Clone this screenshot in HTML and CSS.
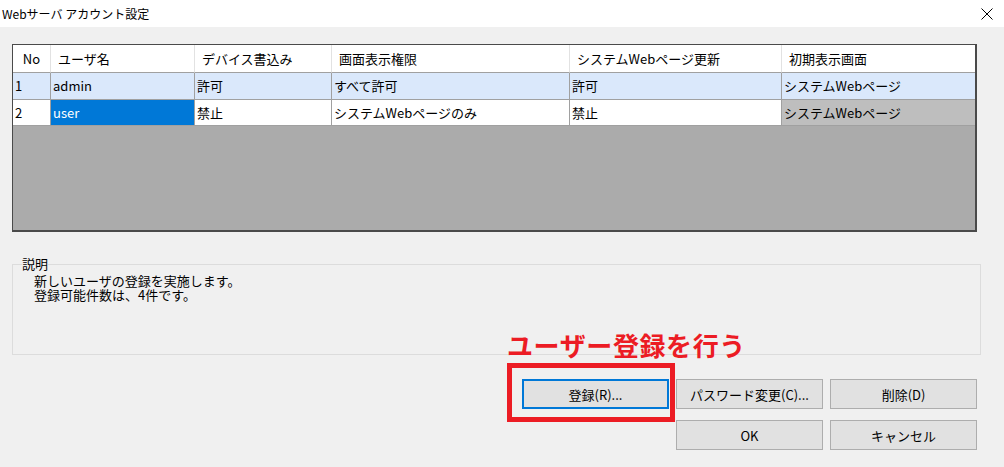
FILE: index.html
```html
<!DOCTYPE html>
<html lang="ja">
<head>
	<meta charset="UTF-8">
	<title>Webサーバ アカウント設定</title>
	<link rel="stylesheet" href="styles.css">
</head>
<body>
	<div class="titlebar">
		<span class="title">Webサーバ アカウント設定</span>
		<svg class="close" width="12" height="12" viewBox="0 0 12 12">
			<path d="M0.5 0.5 L11.5 11.5 M11.5 0.5 L0.5 11.5" stroke="#000" stroke-width="1" fill="none"/>
		</svg>
	</div>
	<div class="dialog">
		<div class="grid">
			<div class="row head">
				<div class="cell no">No</div>
				<div class="cell">ユーザ名</div>
				<div class="cell">デバイス書込み</div>
				<div class="cell">画面表示権限</div>
				<div class="cell">システムWebページ更新</div>
				<div class="cell">初期表示画面</div>
			</div>
			<div class="row r1">
				<div class="cell">1</div>
				<div class="cell">admin</div>
				<div class="cell">許可</div>
				<div class="cell">すべて許可</div>
				<div class="cell">許可</div>
				<div class="cell">システムWebページ</div>
			</div>
			<div class="row r2">
				<div class="cell">2</div>
				<div class="cell sel">user</div>
				<div class="cell">禁止</div>
				<div class="cell">システムWebページのみ</div>
				<div class="cell">禁止</div>
				<div class="cell off">システムWebページ</div>
			</div>
		</div>

		<fieldset class="desc">
			<legend>説明</legend>
			<p>新しいユーザの登録を実施します。<br>登録可能件数は、4件です。</p>
		</fieldset>

		<div class="buttons">
			<button class="focus">登録(R)...</button>
			<button>パスワード変更(C)...</button>
			<button>削除(D)</button>
			<button class="ok">OK</button>
			<button>キャンセル</button>
		</div>

		<div class="note">ユーザー登録を行う</div>
		<div class="mark"></div>
	</div>
</body>
</html>
```

FILE: styles.css
```css
*{
	margin: 0;
	padding: 0;
	box-sizing: border-box;
}
body{
	width: 1004px;
	height: 467px;
	overflow: hidden;
	background-color: #f0f0f0;
	font-family: "Noto Sans CJK JP", "Liberation Sans", sans-serif;
	font-size: 13px;
	color: #000;
}
.titlebar{
	height: 27px;
	background: #fff;
	display: flex;
	align-items: center;
	justify-content: space-between;
	padding: 0 11px 0 2px;
}
.titlebar .title{
	font-size: 12px;
	line-height: 14px;
}
.dialog{
	position: relative;
	padding: 17px 24px 0 12px;
}
.grid{
	width: 965px;
	height: 188px;
	border: 1px solid #4a4a4a;
	border-right-width: 2px;
	border-bottom-width: 2px;
	background: #ababab;
}
.row{
	display: grid;
	grid-template-columns: 38px 144px 137px 238px 212px 193px;
}
.cell{
	height: 27px;
	line-height: 26px;
	padding-left: 2px;
	white-space: nowrap;
	overflow: hidden;
	border-right: 1px solid #a0a0a0;
	border-bottom: 1px solid #a0a0a0;
}
.row .cell:last-child{
	border-right: 0;
}
.head .cell{
	height: 28px;
	line-height: 27px;
	padding-left: 7px;
	background: #fff;
	border-right-color: #e2e2e2;
	border-bottom-color: #a0a0a0;
}
.head .no{
	padding-left: 0;
	text-align: center;
}
.r1 .cell{
	background: #dae8fb;
}
.r2 .cell{
	height: 26px;
	line-height: 25px;
	background: #fff;
}
.r2 .sel{
	background: #0078d7;
	color: #fff;
}
.r2 .off{
	background: #bebebe;
}
.desc{
	width: 969px;
	margin-top: 25px;
	border: 1px solid #dcdcdc;
	padding: 0 0 52px 9px;
}
.desc legend{
	padding: 0;
	line-height: 14px;
}
.desc p{
	margin: 3px 0 0 12px;
	line-height: 14px;
}
.buttons{
	display: grid;
	grid-template-columns: repeat(3, 147px);
	gap: 11px 7px;
	justify-content: end;
	margin: 24px 3px 0 0;
}
.buttons button{
	height: 30px;
	background: #e1e1e1;
	border: 1px solid #adadad;
	font-family: inherit;
	font-size: 13px;
	color: #000;
}
.buttons .focus{
	border: 2px solid #0078d7;
}
.buttons .ok{
	grid-column: 2;
}
.note{
	position: absolute;
	left: 507px;
	top: 304px;
	font-size: 26px;
	line-height: 28px;
	font-weight: bold;
	letter-spacing: 0.6px;
	color: #ec1c24;
}
.mark{
	position: absolute;
	left: 507px;
	top: 336px;
	width: 168px;
	height: 59px;
	border: 5px solid #ec1c24;
}
```
